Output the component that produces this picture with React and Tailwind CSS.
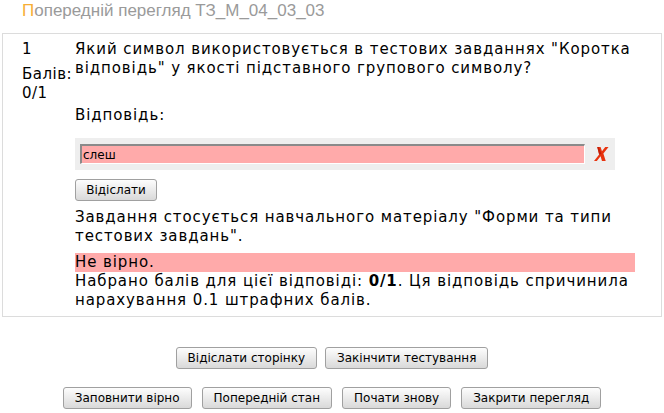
import React from "react";

const Btn = ({ children, className = "" }) => (
  <button
    className={
      "h-[22px] px-[11px] rounded-[3px] border border-[#a0a0a0] bg-gradient-to-b from-[#fdfdfd] to-[#d9d9d9] text-[12px] leading-none tracking-normal text-black font-['DejaVu_Sans',sans-serif] " +
      className
    }
  >
    {children}
  </button>
);

const WrongMark = () => (
  <svg width="15" height="16" viewBox="0 0 16 17" className="block">
    <path d="M3.5 1 L7 1 L8.5 5.5 L12 1 L15.5 1 L10 8 L12.5 16 L8.5 16 L7 11 L3 16 L0 16 L5.5 9 Z" fill="#e8330f" />
    <path d="M3.5 1 L5 1 L8 8.5 L5.5 9 Z" fill="#c21d06" />
  </svg>
);

export default function App() {
  return (
    <div className="w-[664px] h-[413px] bg-white overflow-hidden font-['DejaVu_Sans',sans-serif] text-[15px] leading-[19px] tracking-[0.9px] text-black">
      <h1 className="pl-[22px] pt-[1px] h-[33px] text-[17px] leading-[20px] tracking-normal text-[#9a9a9a] font-['Liberation_Sans',Arial,sans-serif] font-normal">
        <span className="text-[#f7ae35]">П</span>опередній перегляд ТЗ_М_04_03_03
      </h1>

      <div className="mx-[2px] h-[284px] border border-[#dcdcdc] flex pt-[6px]">
        <div className="w-[72px] shrink-0 pl-[19px] tracking-[0.5px]">
          <div>1</div>
          <div className="mt-[6px]">Балів:</div>
          <div>0/1</div>
        </div>

        <div className="w-[560px]">
          <p>
            Який символ використовується в тестових завданнях "Коротка відповідь" у якості підставного групового символу?
          </p>
          <p className="mt-[28px]">Відповідь:</p>

          <div className="mt-[13px] w-[540px] h-[32px] bg-[#eeeeee] flex items-center pl-[5px]">
            <div className="w-[505px] h-[20px] bg-[#ffaaaa] border-t-2 border-l-2 border-[#8a8a8a] border-b border-r border-b-white border-r-white flex items-center pl-[1px] text-[12px] leading-none tracking-normal">
              слеш
            </div>
            <div className="ml-[9px]">
              <WrongMark />
            </div>
          </div>

          <Btn className="mt-[9px] w-[82px] !px-0">Відіслати</Btn>

          <p className="mt-[7px]">
            Завдання стосується навчального матеріалу "Форми та типи тестових завдань".
          </p>
          <div className="mt-[7px] bg-[#ffaaaa]">Не вірно.</div>
          <p>
            Набрано балів для цієї відповіді: <b>0/1</b>. Ця відповідь спричинила нарахування 0.1 штрафних балів.
          </p>
        </div>
      </div>

      <div className="mt-[30px] flex justify-center gap-[8px]">
        <Btn>Відіслати сторінку</Btn>
        <Btn>Закінчити тестування</Btn>
      </div>
      <div className="mt-[18px] flex justify-center gap-[10px]">
        <Btn>Заповнити вірно</Btn>
        <Btn>Попередній стан</Btn>
        <Btn>Почати знову</Btn>
        <Btn>Закрити перегляд</Btn>
      </div>
    </div>
  );
}
